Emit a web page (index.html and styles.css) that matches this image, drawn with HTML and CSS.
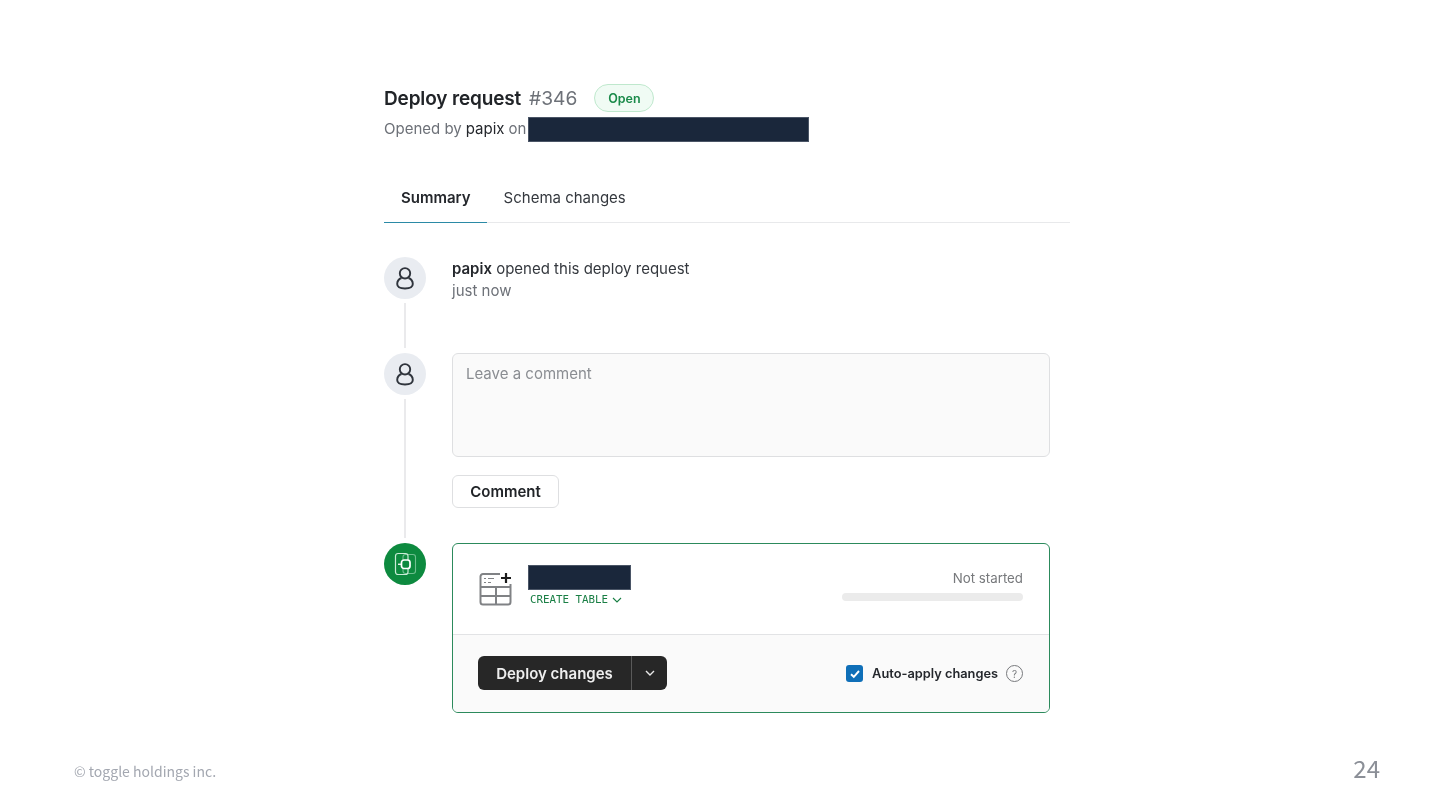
FILE: index.html
```html
<!DOCTYPE html>
<html lang="en">
<head>
<meta charset="utf-8">
<title>Deploy request #346</title>
<link rel="stylesheet" href="styles.css">
</head>
<body>
<div class="slide">
  <main class="content">
    <header class="head">
      <div class="title-row">
        <h1 class="title">Deploy request</h1>
        <span class="number">#346</span>
        <span class="badge">Open</span>
      </div>
      <div class="sub-row">
        <span>Opened by</span> <span class="dark">papix</span> <span>on</span>
        <span class="redact redact-branch"></span>
      </div>
    </header>

    <nav class="tabs">
      <a class="tab active">Summary</a>
      <a class="tab">Schema changes</a>
    </nav>

    <section class="timeline">
      <div class="item item-open">
        <div class="rail">
          <div class="avatar">
            <svg width="18" height="24" viewBox="0 0 18 24" fill="none" stroke="#2f343c" stroke-width="1.900"><circle cx="9" cy="7.300" r="5.200"/><path d="M5.500 12C2.800 13 1.200 15.300 1.200 18c0 3 3 4.500 7.800 4.500s7.800-1.500 7.800-4.500c0-2.700-1.600-5-4.300-6"/></svg>
          </div>
          <div class="line"></div>
        </div>
        <div class="body opened">
          <div class="opened-text"><strong>papix</strong> opened this deploy request</div>
          <div class="when">just now</div>
        </div>
      </div>

      <div class="item item-comment">
        <div class="rail">
          <div class="avatar">
            <svg width="18" height="24" viewBox="0 0 18 24" fill="none" stroke="#2f343c" stroke-width="1.900"><circle cx="9" cy="7.300" r="5.200"/><path d="M5.500 12C2.800 13 1.200 15.300 1.200 18c0 3 3 4.500 7.800 4.500s7.800-1.500 7.800-4.500c0-2.700-1.600-5-4.300-6"/></svg>
          </div>
          <div class="line"></div>
        </div>
        <div class="body">
          <div class="textarea">Leave a comment</div>
          <button class="btn-comment">Comment</button>
        </div>
      </div>

      <div class="item">
        <div class="rail">
          <div class="avatar avatar-green">
            <svg width="24" height="24" viewBox="0 0 24 24" fill="none"><rect x="10" y="2.500" width="12.500" height="19" rx="2.500" stroke="#6fbf8f" stroke-width="1.100"/><rect x="2.500" y="1.500" width="12.500" height="21" rx="2.500" stroke="#c9ebd6" stroke-width="1.200"/><rect x="8.500" y="8" width="8.500" height="8.500" rx="2.500" stroke="#fff" stroke-width="1.700" fill="#0d8a3f"/><path d="M5 12.250H8.500" stroke="#fff" stroke-width="1.300"/></svg>
          </div>
        </div>
        <div class="body">
          <div class="card">
            <div class="card-top">
              <svg class="table-icon" width="34" height="34" viewBox="0 0 34 34" fill="none" stroke="#808285" stroke-width="2"><path d="M21 2H4a2.500 2.500 0 0 0-2.500 2.500V30A2.500 2.500 0 0 0 4 32.500h25a2.500 2.500 0 0 0 2.500-2.500V12"/><path d="M1.500 15h30M1.500 24h30M17 15v17.500"/><path d="M5 6.500h2M9 6.500h6M5 10.500h2M9 10.500h3" stroke-width="1.200"/><path d="M27 1v10M22 6h10" stroke="#1c1c1c" stroke-width="2.200"/></svg>
              <div class="table-info">
                <div class="redact redact-table"></div>
                <div class="ddl">CREATE TABLE <svg width="10" height="6" viewBox="0 0 10 6" fill="none" stroke="#1a7f45" stroke-width="1.100"><path d="M1 1l4 4 4-4"/></svg></div>
              </div>
              <div class="status">
                <div class="status-text">Not started</div>
                <div class="bar"></div>
              </div>
            </div>
            <div class="card-bottom">
              <div class="split">
                <button class="split-main">Deploy changes</button>
                <button class="split-arrow"><svg width="10" height="6" viewBox="0 0 10 6" fill="none" stroke="#e8e8e8" stroke-width="1.400"><path d="M1 1l4 4 4-4"/></svg></button>
              </div>
              <div class="auto">
                <span class="check"><svg width="12" height="10" viewBox="0 0 12 10" fill="none" stroke="#fff" stroke-width="1.900"><path d="M2 5.200l2.800 2.600L10 2"/></svg></span>
                <span class="auto-label">Auto-apply changes</span>
                <span class="help">?</span>
              </div>
            </div>
          </div>
        </div>
      </div>
    </section>
  </main>

  <footer class="foot">
    <span class="copy">© toggle holdings inc.</span>
    <span class="page">24</span>
  </footer>
</div>
</body>
</html>
```

FILE: styles.css
```css
* { box-sizing: border-box; }

html, body {
  margin: 0;
  padding: 0;
  background: #fff;
}

body {
  font-family: Inter, "Liberation Sans", sans-serif;
  color: #24272c;
}

.slide {
  width: 1440px;
  height: 810px;
  overflow: hidden;
  display: flex;
  flex-direction: column;
  filter: blur(0.3px);
}

.content {
  width: 686px;
  margin-left: 384px;
  padding-top: 84px;
  flex: 1;
}

/* Header */
.title-row {
  display: flex;
  align-items: center;
  height: 28px;
}

.title {
  margin: 0;
  font-size: 19px;
  font-weight: 600;
  color: #212428;
  letter-spacing: -0.15px;
}

.number {
  margin-left: 8px;
  font-size: 19.200px;
  color: #6d7178;
}

.badge {
  margin-left: 17px;
  width: 60px;
  height: 28px;
  border-radius: 14px;
  border: 1px solid #bfe8cd;
  background: #f0fbf4;
  color: #1a8a4a;
  font-size: 12.500px;
  font-weight: 600;
  display: flex;
  align-items: center;
  justify-content: center;
}

.sub-row {
  display: flex;
  align-items: center;
  height: 24px;
  margin-top: 4px;
  font-size: 15px;
  color: #6d7178;
  gap: 4px;
}

.dark { color: #24272c; }

.redact {
  background: #1a273b;
  border: 1px solid #4a5566;
}

.redact-branch {
  align-self: flex-start;
  width: 281px;
  height: 25px;
  margin-top: 1px;
  margin-left: -2px;
}

/* Tabs */
.tabs {
  display: flex;
  height: 51px;
  margin-top: 32px;
  border-bottom: 1px solid #e8e9eb;
}

.tab {
  height: 51px;
  padding: 0 17px;
  display: flex;
  align-items: center;
  font-size: 15px;
  color: #34383e;
}

.tab.active {
  padding-right: 16px;
  font-weight: 600;
  color: #24272c;
  border-bottom: 1px solid #2b8aa6;
}

/* Timeline */
.timeline {
  margin-top: 34px;
}

.item {
  display: flex;
  gap: 26px;
}

.item-open { height: 96px; }
.item-comment { height: 190px; }

.rail {
  width: 42px;
  display: flex;
  flex-direction: column;
  align-items: center;
}

.avatar {
  width: 42px;
  height: 42px;
  flex: none;
  border-radius: 50%;
  background: #e9ecf1;
  display: flex;
  align-items: center;
  justify-content: center;
}

.avatar-green { background: #0d8a3f; }

.line {
  width: 2px;
  flex: 1;
  margin: 4px 0 5px;
  background: #eaeaec;
}

.body {
  width: 598px;
}

.opened {
  padding-top: 1px;
  font-size: 15px;
  line-height: 22px;
}

.opened-text { color: #34383e; }
.opened-text strong { font-weight: 600; color: #24272c; }
.when { color: #6d7178; }

.textarea {
  height: 104px;
  padding: 10px 13px;
  border: 1px solid #dedfe1;
  border-radius: 6px;
  background: #fafafa;
  color: #8a8d92;
  font-size: 15px;
  line-height: 20px;
}

.btn-comment {
  display: block;
  margin-top: 18px;
  width: 107px;
  height: 33px;
  padding: 0;
  border: 1px solid #dedfe1;
  border-radius: 6px;
  background: #fff;
  color: #212428;
  font: 600 15px Inter, "Liberation Sans", sans-serif;
}

/* Card */
.card {
  height: 170px;
  border: 1px solid #2c8a5c;
  border-radius: 6px;
  overflow: hidden;
  display: flex;
  flex-direction: column;
}

.card-top {
  height: 91px;
  display: flex;
  padding: 21px 26px 0 26px;
  border-bottom: 1px solid #e2e3e5;
}

.table-icon {
  margin-top: 7px;
  flex: none;
}

.table-info {
  margin-left: 15px;
}

.redact-table {
  width: 103px;
  height: 25px;
}

.ddl {
  margin-top: 2px;
  padding-left: 2px;
  font-family: "DejaVu Sans Mono", "Liberation Mono", monospace;
  font-size: 10.800px;
  line-height: 16px;
  color: #1a7f45;
  display: flex;
  align-items: center;
  gap: 4px;
}

.status {
  margin-left: auto;
  width: 181px;
  padding-top: 4px;
  text-align: right;
}

.status-text {
  font-size: 13.300px;
  line-height: 18px;
  color: #77797c;
}

.bar {
  margin-top: 6px;
  height: 8px;
  border-radius: 4px;
  background: #ebebeb;
}

.card-bottom {
  flex: 1;
  background: #fafafa;
  display: flex;
  align-items: center;
  justify-content: space-between;
  padding: 0 26px 0 25px;
}

.split {
  display: flex;
  height: 34px;
  margin-bottom: 2px;
}

.split button {
  border: 0;
  padding: 0;
  background: #272727;
  height: 34px;
}

.split-main {
  width: 153px;
  padding-top: 2px !important;
  border-radius: 6px 0 0 6px;
  color: #eeeeee;
  font: 600 15px Inter, "Liberation Sans", sans-serif;
}

.split .split-arrow {
  width: 36px;
  border-left: 1px solid #5a5a5a;
  border-radius: 0 6px 6px 0;
  display: flex;
  align-items: center;
  justify-content: center;
}

.auto {
  display: flex;
  align-items: center;
}

.check {
  width: 17px;
  height: 17px;
  border-radius: 3px;
  background: #0f6fb8;
  display: flex;
  align-items: center;
  justify-content: center;
}

.auto-label {
  margin-left: 9px;
  font-size: 12.800px;
  font-weight: 600;
  color: #24272c;
}

.help {
  margin-left: 8px;
  width: 17px;
  height: 17px;
  border: 1px solid #77797c;
  border-radius: 50%;
  color: #77797c;
  font-size: 10px;
  display: flex;
  align-items: center;
  justify-content: center;
}

/* Footer */
.foot {
  height: 77px;
  padding: 0 60px 4px 74px;
  display: flex;
  align-items: center;
  justify-content: space-between;
}

.copy {
  font-family: "Noto Sans CJK JP", "Noto Sans", sans-serif;
  font-size: 14px;
  color: #a3a7b0;
  padding-top: 2px;
}

.page {
  font-family: "Noto Sans CJK JP", "Noto Sans", sans-serif;
  font-size: 24px;
  font-weight: 400;
  color: #8b8f97;
  padding-bottom: 4px;
}
```
